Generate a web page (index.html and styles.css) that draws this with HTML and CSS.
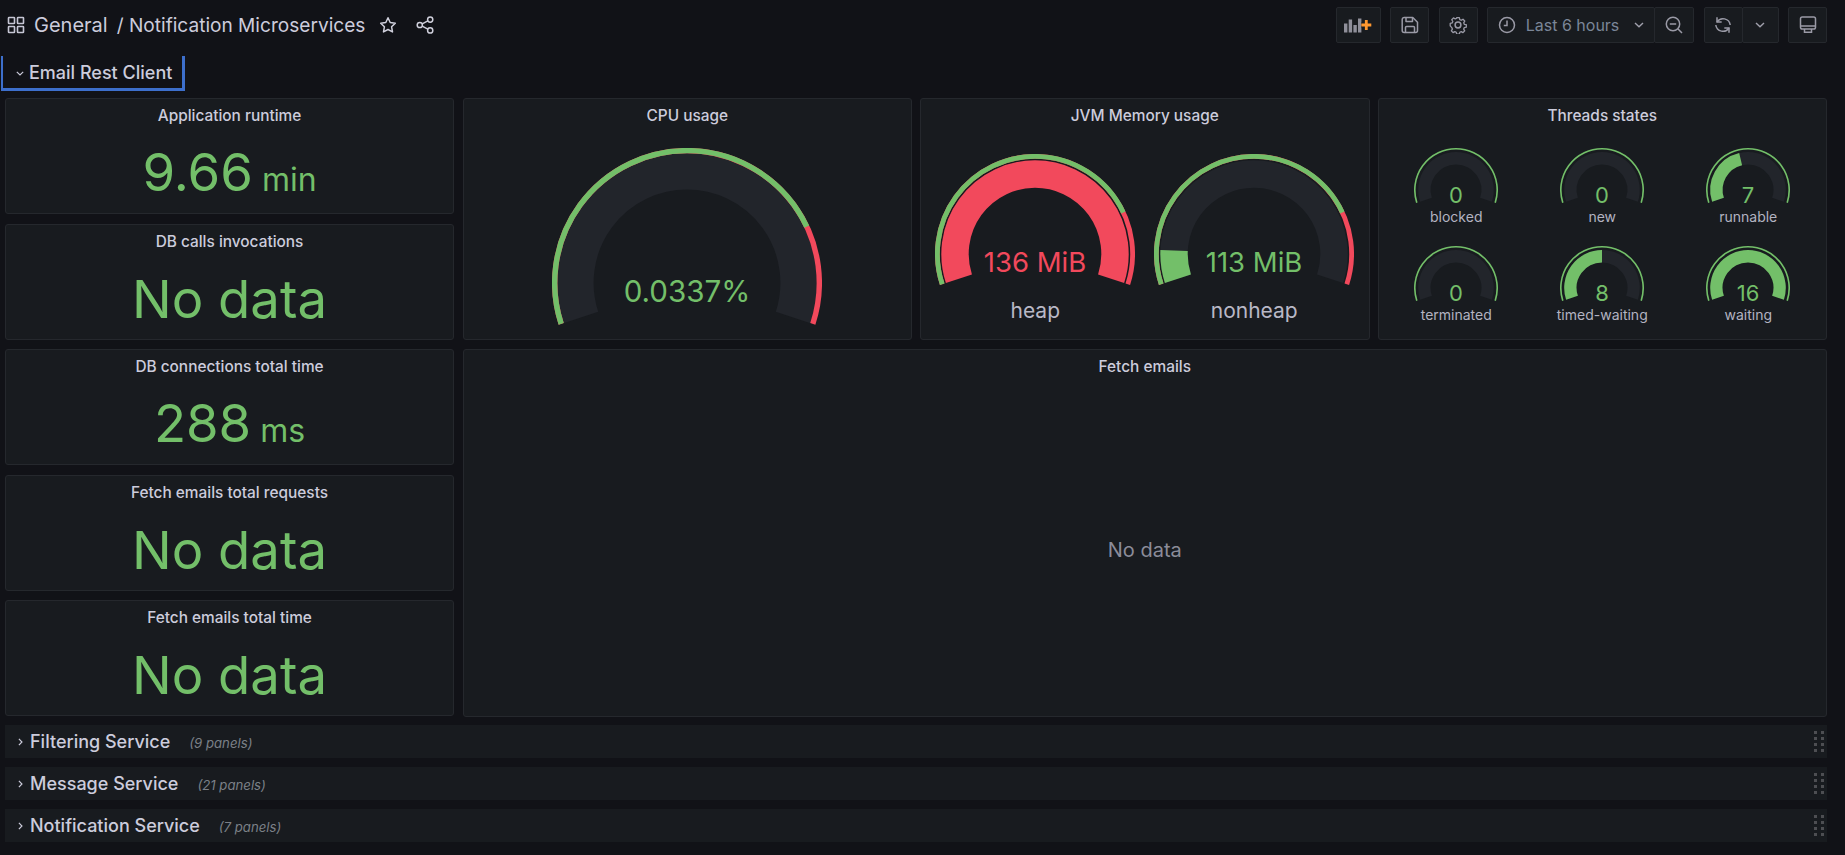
FILE: index.html
```html
<!DOCTYPE html>
<html lang="en">
<head>
<meta charset="utf-8">
<title>Notification Microservices</title>
<link rel="stylesheet" href="styles.css">
</head>
<body>
<svg class="defs" width="0" height="0" aria-hidden="true">
  <defs>
    <path id="arc-cpu-t" d="M-125.8 40.9A132.3 132.3 0 1 1 125.8 40.9" pathLength="100"/>
    <path id="arc-cpu-b" d="M-106.2 34.5A111.7 111.7 0 1 1 106.2 34.5" pathLength="100"/>
    <path id="arc-jvm-t" d="M-92.8 30.2A97.6 97.6 0 1 1 92.8 30.2" pathLength="100"/>
    <path id="arc-jvm-b" d="M-76.1 24.7A80 80 0 1 1 76.1 24.7" pathLength="100"/>
    <path id="arc-th-t" d="M-39.2 12.7A41.2 41.2 0 1 1 39.2 12.7" pathLength="100"/>
    <path id="arc-th-b" d="M-30 9.8A31.6 31.6 0 1 1 30 9.8" pathLength="100"/>
    <g id="handle">
      <rect x="0" y="0" width="3" height="3"/><rect x="7" y="0" width="3" height="3"/>
      <rect x="0" y="6" width="3" height="3"/><rect x="7" y="6" width="3" height="3"/>
      <rect x="0" y="12" width="3" height="3"/><rect x="7" y="12" width="3" height="3"/>
      <rect x="0" y="18" width="3" height="3"/><rect x="7" y="18" width="3" height="3"/>
    </g>
  </defs>
</svg>

<header class="nav">
  <div class="nav-left">
    <svg class="ico-apps" viewBox="0 0 18 18" width="18" height="18"><g fill="none" stroke="#c6c6d4" stroke-width="1.6"><rect x="1.5" y="1.5" width="6" height="6" rx=".6"/><rect x="10.5" y="1.5" width="6" height="6" rx=".6"/><rect x="1.5" y="10.5" width="6" height="6" rx=".6"/><rect x="10.5" y="10.5" width="6" height="6" rx=".6"/></g></svg>
    <span class="crumb">General</span>
    <span class="crumb crumb-sep">/ Notification Microservices</span>
    <svg class="ico-star" viewBox="0 0 18 18" width="18" height="18"><path d="M9 1.8l2.2 4.7 5.1.7-3.7 3.6.9 5.1L9 13.5l-4.5 2.4.9-5.1-3.7-3.6 5.1-.7z" fill="none" stroke="#d0d0dc" stroke-width="1.5" stroke-linejoin="round"/></svg>
    <svg class="ico-share" viewBox="0 0 18 18" width="18" height="18"><g fill="none" stroke="#d0d0dc" stroke-width="1.5"><circle cx="3.8" cy="9" r="2.6"/><circle cx="14.2" cy="3.6" r="2.6"/><circle cx="14.2" cy="14.4" r="2.6"/><path d="M6.2 7.8l5.6-3M6.2 10.2l5.6 3"/></g></svg>
  </div>
  <div class="nav-right">
    <button class="btn btn-add"><svg viewBox="0 0 28 16" width="28" height="16"><g fill="#8f8f9a"><rect x="0" y="6.500" width="3.400" height="9"/><rect x="4.700" y="2.500" width="3.400" height="13"/><rect x="9.400" y="8" width="3.400" height="7.500"/><rect x="14" y="1.500" width="3.400" height="14"/></g><path d="M22.300 3v10M17.300 8h10" stroke="#181b1f" stroke-width="5" fill="none"/><path d="M22.300 3v10M17.300 8h10" stroke="#ff9830" stroke-width="2.800" fill="none"/></svg></button>
    <button class="btn btn-icon"><svg viewBox="0 0 18 18" width="18" height="18"><g fill="none" stroke="#9a9aa6" stroke-width="1.5" stroke-linejoin="round"><path d="M3.200 1.500h8.600l4.700 4.700v8.300a2 2 0 0 1-2 2h-11.300a2 2 0 0 1-2-2v-11a2 2 0 0 1 2-2z"/><path d="M5 1.700v3.800h6.500V2M4.500 16.300v-4.800a1 1 0 0 1 1-1h7a1 1 0 0 1 1 1v4.800"/></g></svg></button>
    <button class="btn btn-icon"><svg viewBox="0 0 18 18" width="18" height="18"><g fill="none" stroke="#9a9aa6" stroke-width="1.5" stroke-linejoin="round"><circle cx="9" cy="9" r="2.900"/><path d="M7.500 1h3l.5 2.300 1.700.8 2-1.200 2 2.100-1.200 2 .7 1.700 2.300.5v2.800l-2.300.5-.7 1.700 1.200 2-2 2.100-2-1.200-1.700.8-.5 2.200h-3l-.5-2.200-1.700-.8-2 1.200-2-2.100 1.200-2-.7-1.700L0 10.500V7.700l2.300-.5.700-1.700-1.200-2 2-2.100 2 1.200 1.700-.8z" transform="translate(1.200 .7) scale(.87)"/></g></svg></button>
    <div class="btn-group">
      <button class="btn btn-time">
        <svg viewBox="0 0 18 18" width="18" height="18"><g fill="none" stroke="#9a9aa6" stroke-width="1.5"><circle cx="9" cy="9" r="7.500"/><path d="M9 4.500V9.500H5.800"/></g></svg>
        <span>Last 6 hours</span>
        <svg class="chev" viewBox="0 0 10 6" width="10" height="6"><path d="M1 1l4 3.800L9 1" fill="none" stroke="#a0a0ac" stroke-width="1.400"/></svg>
      </button>
      <button class="btn btn-zoom"><svg viewBox="0 0 18 18" width="18" height="18"><g fill="none" stroke="#9a9aa6" stroke-width="1.5"><circle cx="8" cy="8" r="6.700"/><path d="M4.800 8h6.400M12.800 12.800L17 17"/></g></svg></button>
    </div>
    <div class="btn-group">
      <button class="btn btn-refresh"><svg viewBox="0 0 18 18" width="18" height="18"><g fill="none" stroke="#9a9aa6" stroke-width="1.5"><path d="M3 6A7.200 7.200 0 0 1 16.200 9"/><path d="M3 1.300V6h4.700"/><path d="M15 12A7.200 7.200 0 0 1 1.800 9"/><path d="M15 16.700V12h-4.700"/></g></svg></button>
      <button class="btn btn-drop"><svg viewBox="0 0 10 6" width="10" height="6"><path d="M1 1l4 3.800L9 1" fill="none" stroke="#a0a0ac" stroke-width="1.400"/></svg></button>
    </div>
    <button class="btn btn-icon btn-tv"><svg viewBox="0 0 18 18" width="18" height="18"><g fill="none" stroke="#9a9aa6" stroke-width="1.5"><rect x="1.500" y="1" width="15" height="12" rx="1.800"/><path d="M1.500 10h15M5.500 13v3.200h7V13"/></g></svg></button>
  </div>
</header>

<main class="content">
  <div class="row-active"><svg class="row-chev" viewBox="0 0 10 6" width="8" height="5"><path d="M1 1l4 3.800L9 1" fill="none" stroke="#ccccdc" stroke-width="1.500"/></svg><span class="row-title">Email Rest Client</span></div>

  <section class="grid">
    <div class="left-stack">
      <article class="panel stat"><h2 class="panel-title">Application runtime</h2><div class="stat-body"><span class="stat-val">9.66</span><span class="stat-unit">min</span></div></article>
      <article class="panel stat"><h2 class="panel-title">DB calls invocations</h2><div class="stat-body"><span class="stat-val">No data</span></div></article>
      <article class="panel stat"><h2 class="panel-title">DB connections total time</h2><div class="stat-body"><span class="stat-val">288</span><span class="stat-unit">ms</span></div></article>
      <article class="panel stat"><h2 class="panel-title">Fetch emails total requests</h2><div class="stat-body"><span class="stat-val">No data</span></div></article>
      <article class="panel stat"><h2 class="panel-title">Fetch emails total time</h2><div class="stat-body"><span class="stat-val">No data</span></div></article>
    </div>

    <article class="panel panel-cpu"><h2 class="panel-title">CPU usage</h2>
      <svg class="g-cpu" viewBox="-135 -135 270 178" width="270" height="178">
        <use href="#arc-cpu-b" class="g-track w-cpu-b"/>
        <use href="#arc-cpu-t" class="g-red w-cpu-t"/>
        <use href="#arc-cpu-t" class="g-green w-cpu-t d80"/>
        <text class="g-text t-cpu" y="19" text-anchor="middle">0.0337%</text>
      </svg>
    </article>

    <article class="panel panel-jvm"><h2 class="panel-title">JVM Memory usage</h2>
      <div class="jvm-row">
        <figure class="jvm-cell">
          <svg viewBox="-100 -100 200 132" width="200" height="132">
            <use href="#arc-jvm-b" class="g-fill-red w-jvm-b"/>
            <use href="#arc-jvm-t" class="g-red w-jvm-t"/>
            <use href="#arc-jvm-t" class="g-green w-jvm-t d80"/>
            <text class="g-text t-jvm is-red" y="18" text-anchor="middle">136 MiB</text>
          </svg>
          <figcaption class="jvm-label">heap</figcaption>
        </figure>
        <figure class="jvm-cell">
          <svg viewBox="-100 -100 200 132" width="200" height="132">
            <use href="#arc-jvm-b" class="g-track w-jvm-b"/>
            <use href="#arc-jvm-b" class="g-fill-green w-jvm-b d9"/>
            <use href="#arc-jvm-t" class="g-red w-jvm-t"/>
            <use href="#arc-jvm-t" class="g-green w-jvm-t d80"/>
            <text class="g-text t-jvm" y="18" text-anchor="middle">113 MiB</text>
          </svg>
          <figcaption class="jvm-label">nonheap</figcaption>
        </figure>
      </div>
    </article>

    <article class="panel panel-threads"><h2 class="panel-title">Threads states</h2>
      <div class="th-grid">
        <figure class="th-cell"><svg viewBox="-42 -42 84 60" width="84" height="60"><use href="#arc-th-b" class="g-track w-th-b"/><use href="#arc-th-t" class="g-green w-th-t"/><text class="g-text t-th" y="13" text-anchor="middle">0</text></svg><figcaption class="th-label">blocked</figcaption></figure>
        <figure class="th-cell"><svg viewBox="-42 -42 84 60" width="84" height="60"><use href="#arc-th-b" class="g-track w-th-b"/><use href="#arc-th-t" class="g-green w-th-t"/><text class="g-text t-th" y="13" text-anchor="middle">0</text></svg><figcaption class="th-label">new</figcaption></figure>
        <figure class="th-cell"><svg viewBox="-42 -42 84 60" width="84" height="60"><use href="#arc-th-b" class="g-track w-th-b"/><use href="#arc-th-b" class="g-fill-green w-th-b d44"/><use href="#arc-th-t" class="g-green w-th-t"/><text class="g-text t-th" y="13" text-anchor="middle">7</text></svg><figcaption class="th-label">runnable</figcaption></figure>
        <figure class="th-cell"><svg viewBox="-42 -42 84 60" width="84" height="60"><use href="#arc-th-b" class="g-track w-th-b"/><use href="#arc-th-t" class="g-green w-th-t"/><text class="g-text t-th" y="13" text-anchor="middle">0</text></svg><figcaption class="th-label">terminated</figcaption></figure>
        <figure class="th-cell"><svg viewBox="-42 -42 84 60" width="84" height="60"><use href="#arc-th-b" class="g-track w-th-b"/><use href="#arc-th-b" class="g-fill-green w-th-b d50"/><use href="#arc-th-t" class="g-green w-th-t"/><text class="g-text t-th" y="13" text-anchor="middle">8</text></svg><figcaption class="th-label">timed-waiting</figcaption></figure>
        <figure class="th-cell"><svg viewBox="-42 -42 84 60" width="84" height="60"><use href="#arc-th-b" class="g-fill-green w-th-b"/><use href="#arc-th-t" class="g-green w-th-t"/><text class="g-text t-th" y="13" text-anchor="middle">16</text></svg><figcaption class="th-label">waiting</figcaption></figure>
      </div>
    </article>

    <article class="panel panel-fetch"><h2 class="panel-title">Fetch emails</h2><div class="no-data">No data</div></article>
  </section>

  <section class="rows">
    <div class="row"><svg class="row-chev-r" viewBox="0 0 6 10" width="5" height="8"><path d="M1 1l3.800 4L1 9" fill="none" stroke="#ccccdc" stroke-width="1.500"/></svg><span class="row-title">Filtering Service</span><span class="row-count">(9 panels)</span><svg class="handle" viewBox="0 0 10 21" width="10" height="21"><use href="#handle"/></svg></div>
    <div class="row"><svg class="row-chev-r" viewBox="0 0 6 10" width="5" height="8"><path d="M1 1l3.800 4L1 9" fill="none" stroke="#ccccdc" stroke-width="1.500"/></svg><span class="row-title">Message Service</span><span class="row-count">(21 panels)</span><svg class="handle" viewBox="0 0 10 21" width="10" height="21"><use href="#handle"/></svg></div>
    <div class="row"><svg class="row-chev-r" viewBox="0 0 6 10" width="5" height="8"><path d="M1 1l3.800 4L1 9" fill="none" stroke="#ccccdc" stroke-width="1.500"/></svg><span class="row-title">Notification Service</span><span class="row-count">(7 panels)</span><svg class="handle" viewBox="0 0 10 21" width="10" height="21"><use href="#handle"/></svg></div>
  </section>
</main>
</body>
</html>
```

FILE: styles.css
```css
* { box-sizing: border-box; }
html, body { margin: 0; height: 100%; }
body {
  background: #111217;
  color: #ccccdc;
  font-family: Inter, "Noto Sans", sans-serif;
  overflow: hidden;
}
.defs { display: block; height: 0; }

/* top bar */
.nav {
  height: 56px;
  display: flex;
  justify-content: space-between;
  align-items: flex-start;
  padding: 7px 18px 0 7px;
}
.nav-left { display: flex; align-items: center; height: 36px; }
.crumb { font-size: 20px; color: #ccccdc; margin-left: 9px; }
.crumb-sep { margin-left: 9px; font-size: 19.100px; }
.ico-star { margin-left: 14px; }
.ico-share { margin-left: 19px; }
.nav-right { display: flex; gap: 9.500px; }
.btn {
  height: 36px;
  background: #181b1f;
  border: 1px solid #25282d;
  border-radius: 2px;
  display: flex;
  align-items: center;
  justify-content: center;
  padding: 0;
  font-family: inherit;
  color: #7b8087;
}
.btn-add { width: 45px; }
.btn-icon { width: 39px; }
.btn-group { display: flex; }
.btn-group .btn + .btn { margin-left: -1px; }
.btn-time { width: 168px; gap: 10px; font-size: 16px; color: #7b8698; }
.btn-time .chev { margin-left: 5px; }
.btn-zoom { width: 40px; }
.btn-refresh { width: 39px; }
.btn-drop { width: 37px; }
.btn-tv { width: 39px; }

/* content */
.content { padding: 0 18px 0 5px; }
.row-active {
  width: 184px;
  height: 35px;
  margin-left: -4px;
  border: solid #3d6fcc;
  border-width: 0 3px 3px 2px;
  display: flex;
  align-items: center;
  padding-left: 13px;
}
.row-title { font-size: 18px; font-weight: 500; color: #ccccdc; }
.row-chev { margin-right: 5px; margin-top: 3px; }

.grid {
  margin-top: 7px;
  display: grid;
  grid-template-columns: repeat(4, 449.500px);
  grid-template-rows: 242px 368px;
  column-gap: 8px;
  row-gap: 9px;
}
.left-stack {
  grid-row: 1 / span 2;
  width: 449px;
  display: grid;
  grid-template-rows: repeat(5, 116px);
  row-gap: 9.500px;
}
.panel {
  background: #181b1f;
  border: 1px solid #25282d;
  border-radius: 3px;
  position: relative;
  min-width: 0;
}
.panel-title {
  margin: 0;
  padding-top: 7px;
  height: 31px;
  text-align: center;
  font-size: 15.400px;
  font-weight: 500;
  line-height: 20px;
  color: #ccccdc;
}
.stat { display: flex; flex-direction: column; }
.stat-body {
  flex: 1;
  display: flex;
  justify-content: center;
  align-items: baseline;
  gap: 9px;
  color: #73bf69;
  line-height: 66px;
  padding-top: 10px;
}
.stat-val { font-size: 52.700px; }
.stat-unit { font-size: 32px; }

.panel-cpu { grid-column: 2; grid-row: 1; display: flex; flex-direction: column; align-items: center; }
.g-cpu { margin-top: 18px; }
.panel-jvm { grid-column: 3; grid-row: 1; }
.jvm-row { display: flex; justify-content: center; margin-top: 24px; }
.jvm-cell { margin: 0; width: 219px; display: flex; flex-direction: column; align-items: center; }
.jvm-label { font-size: 21px; line-height: 26px; color: #b8b8c6; margin-top: 12px; }
.panel-threads { grid-column: 4; grid-row: 1; }
.th-grid {
  display: grid;
  grid-template-columns: repeat(3, 146px);
  grid-auto-rows: 98.300px;
  justify-content: center;
  margin-top: 18px;
}
.th-cell { margin: 0; display: flex; flex-direction: column; align-items: center; }
.th-label { font-size: 14px; line-height: 18px; color: #b3b3c1; }
.panel-fetch { grid-column: 2 / span 3; grid-row: 2; display: flex; flex-direction: column; }
.no-data {
  flex: 1;
  display: flex;
  align-items: center;
  justify-content: center;
  font-size: 20px;
  color: #8b8c99;
  padding-top: 2px;
}

/* gauges */
.g-track, .g-red, .g-green, .g-fill-red, .g-fill-green { fill: none; }
.g-track { stroke: #22252b; }
.g-red { stroke: #f2495c; }
.g-fill-red { stroke: #f2495c; }
.g-green, .g-fill-green { stroke: #73bf69; }
.w-cpu-t { stroke-width: 5.400px; }
.w-cpu-b { stroke-width: 36.600px; }
.w-jvm-t { stroke-width: 4.800px; }
.w-jvm-b { stroke-width: 27.400px; }
.w-th-t { stroke-width: 1.600px; }
.w-th-b { stroke-width: 12.400px; }
.d80 { stroke-dasharray: 80 100; }
.d9 { stroke-dasharray: 9.500 100; }
.d44 { stroke-dasharray: 43.750 100; }
.d50 { stroke-dasharray: 50 100; }
.g-text { fill: #73bf69; font-family: Inter, "Noto Sans", sans-serif; }
.is-red { fill: #f2495c; }
.t-cpu { font-size: 29.600px; }
.t-jvm { font-size: 27.500px; }
.t-th { font-size: 22px; }

/* collapsed rows */
.rows { margin-top: 8px; display: flex; flex-direction: column; gap: 9px; }
.row {
  height: 33px;
  background: #181b1f;
  display: flex;
  align-items: center;
  padding-left: 13px;
}
.row-chev-r { margin-right: 7px; margin-top: 1px; }
.row-count { margin-left: 19px; font-size: 13.200px; font-style: italic; color: #7b8087; margin-top: 2px; }
.handle { margin-left: auto; margin-right: 3px; fill: #4d4e52; }
```
